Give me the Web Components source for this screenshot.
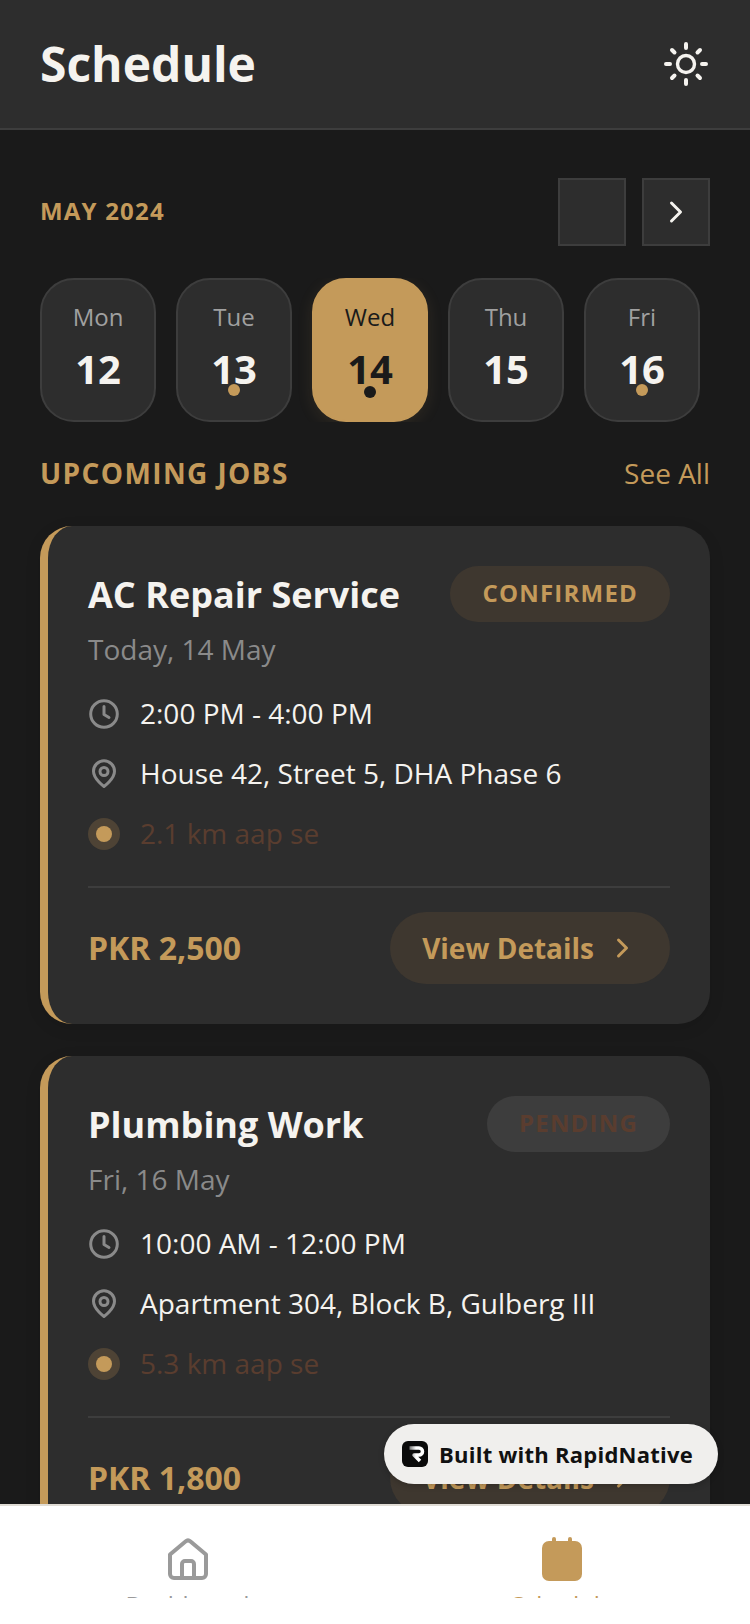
<!DOCTYPE html>
<html lang="en"><head><meta charset="utf-8"><title>Schedule</title>
<style>
html,body{margin:0;padding:0;background:#1a1a1a;}
body{width:750px;height:1624px;overflow:hidden;font-family:"Open Sans","Noto Sans",sans-serif;}
</style></head>
<body>
<app-shell>
  <app-header slot="header" title="Schedule"></app-header>
  <month-nav label="MAY 2024"></month-nav>
  <day-strip>
    <day-cell day="Mon" num="12"></day-cell>
    <day-cell day="Tue" num="13" dot></day-cell>
    <day-cell day="Wed" num="14" dot selected></day-cell>
    <day-cell day="Thu" num="15"></day-cell>
    <day-cell day="Fri" num="16" dot></day-cell>
  </day-strip>
  <section-head title="UPCOMING JOBS" action="See All"></section-head>
  <job-card title="AC Repair Service" status="CONFIRMED" date="Today, 14 May" time="2:00 PM - 4:00 PM" place="House 42, Street 5, DHA Phase 6" dist="2.1 km aap se" price="PKR 2,500"></job-card>
  <job-card pending title="Plumbing Work" status="PENDING" date="Fri, 16 May" time="10:00 AM - 12:00 PM" place="Apartment 304, Block B, Gulberg III" dist="5.3 km aap se" price="PKR 1,800"></job-card>
  <bottom-nav slot="nav"></bottom-nav>
  <built-badge slot="overlay"></built-badge>
</app-shell>
<script>
const GOLD='#c49a5a';
function def(name,html,init){
  customElements.define(name,class extends HTMLElement{
    connectedCallback(){
      if(this.shadowRoot)return;
      const a=n=>{const v=this.getAttribute(n);return v==null?'':v;};
      this.attachShadow({mode:'open'}).innerHTML=html(a,this);
      if(init)init(this);
    }
  });
}
def('app-shell',()=>`<style>
:host{display:flex;flex-direction:column;width:750px;height:1624px;position:relative;overflow:hidden;background:#1a1a1a;color:#f5f3ef;}
main{flex:1;min-height:0;overflow:hidden;padding:48px 40px 0;box-sizing:border-box;}
</style>
<slot name="header"></slot><main><slot></slot></main><slot name="nav"></slot><slot name="overlay"></slot>`);

def('app-header',a=>`<style>
:host{display:flex;flex:none;align-items:center;justify-content:space-between;height:130px;box-sizing:border-box;padding:0 40px;background:#2d2d2d;border-bottom:2px solid #3d3d3d;}
h1{margin:0;font:700 48px/64px "Open Sans",sans-serif;color:#f5f3ef;}
svg{display:block}
</style><h1>${a('title')}</h1>
<svg width="48" height="48" viewBox="0 0 48 48" fill="none" stroke="#f5f3ef" stroke-width="4" stroke-linecap="round"><circle cx="24" cy="24" r="8.500" stroke-width="3.400"/><path d="M24 4v4M24 40v4M4 24h4M40 24h4M10 10l2.500 2.500M35.500 35.500l2.500 2.500M10 38l2.500-2.500M35.500 12.500l2.500-2.500"/></svg>`);

def('month-nav',a=>`<style>
:host{display:flex;align-items:center;justify-content:space-between;height:68px;margin-bottom:32px;}
span{font:700 24px/32px "Open Sans",sans-serif;letter-spacing:1.2px;color:${GOLD};padding-bottom:2px;}
div{display:flex;gap:16px}
button{all:unset;display:flex;align-items:center;justify-content:center;box-sizing:border-box;width:68px;height:68px;background:#2d2d2d;border:2px solid #3d3d3d;}
</style><span>${a('label')}</span><div><button aria-label="Previous"></button><button aria-label="Next"><svg width="24" height="24" viewBox="0 0 24 24" fill="none" stroke="#f5f3ef" stroke-width="3" stroke-linecap="round" stroke-linejoin="round"><path d="M7.500 3l9 9-9 9"/></svg></button></div>`);

def('day-strip',()=>`<style>:host{display:flex;gap:20px;height:144px;overflow:hidden;}</style><slot></slot>`);

def('day-cell',(a,el)=>{const s=el.hasAttribute('selected'),d=el.hasAttribute('dot');return `<style>
:host{display:flex;flex:none;flex-direction:column;align-items:center;position:relative;box-sizing:border-box;width:116px;height:144px;padding-top:20px;border-radius:34px;
background:${s?GOLD:'#2d2d2d'};border:2px solid ${s?GOLD:'#3d3d3d'};${s?`box-shadow:0 4px 16px rgba(196,154,90,.12);`:''}}
.d{font:400 24px/34px "Open Sans",sans-serif;color:${s?'#1a1a1a':'#a0a0a0'};}
.n{font:700 40px/54px "Open Sans",sans-serif;color:${s?'#1a1a1a':'#f5f3ef'};margin-top:8px;}
i{position:absolute;left:50%;top:${s?'106px':'104px'};width:12px;height:12px;margin-left:-6px;border-radius:50%;background:${s?'#1a1a1a':GOLD};}
</style><span class="d">${a('day')}</span><span class="n">${a('num')}</span>${d?'<i></i>':''}`;});

def('section-head',a=>`<style>
:host{display:flex;align-items:center;justify-content:space-between;height:40px;margin:32px 0;}
b{font:700 28px/38px "Open Sans",sans-serif;letter-spacing:1.4px;color:${GOLD};padding-bottom:2px;}
span{font:400 28px/38px "Open Sans",sans-serif;color:${GOLD};padding-bottom:2px;}
</style><b>${a('title')}</b><span>${a('action')}</span>`);

def('job-card',(a,el)=>{const p=el.hasAttribute('pending');return `<style>
:host{display:block;box-sizing:border-box;height:498px;margin-bottom:32px;padding:40px 40px 40px 40px;background:#2d2d2d;border-left:8px solid ${GOLD};border-radius:32px;box-shadow:0 4px 16px rgba(0,0,0,.1);}
.top{display:flex;justify-content:space-between;align-items:flex-start;margin-bottom:25px;}
h2{margin:0;font:700 36px/58px "Open Sans",sans-serif;color:#f5f3ef;}
.date{font:400 28px/40px "Open Sans",sans-serif;color:#8a8a8a;margin-top:5px;}
.status{box-sizing:border-box;height:56px;padding:0 32px 2px;border-radius:28px;display:flex;align-items:center;font:700 24px/32px "Open Sans",sans-serif;letter-spacing:1.2px;
color:${p?'#5a3d2f':GOLD};background:${p?'#3d3d3d':'#3e372f'};}
.rows{display:flex;flex-direction:column;gap:20px;}
.row{display:flex;align-items:center;gap:20px;height:40px;font:400 28px/38px "Open Sans",sans-serif;color:#f5f3ef;}
.row span.t{padding-bottom:2px}
.row svg{display:block;flex:none}
.far{color:#5a3d2f;}
.ring{flex:none;box-sizing:border-box;width:32px;height:32px;border-radius:50%;background:#4e4335;display:flex;align-items:center;justify-content:center;}
.ring i{display:block;width:16px;height:16px;border-radius:50%;background:${GOLD};}
hr{border:0;height:2px;background:#3d3d3d;margin:32px 0 24px;}
.foot{display:flex;align-items:center;justify-content:space-between;}
.price{font:700 32px/44px "Open Sans",sans-serif;color:${GOLD};}
.btn{box-sizing:border-box;height:72px;padding:0 32px;border-radius:36px;background:#3e372f;display:flex;align-items:center;gap:16px;font:700 28px/40px "Open Sans",sans-serif;color:${GOLD};}
.btn svg{display:block}
</style>
<div class="top"><div><h2>${a('title')}</h2><div class="date">${a('date')}</div></div><div class="status">${a('status')}</div></div>
<div class="rows">
<div class="row"><svg width="32" height="32" viewBox="0 0 32 32" fill="none" stroke="#8a8a8a" stroke-width="3" stroke-linecap="round" stroke-linejoin="round"><circle cx="16" cy="16" r="13.300"/><path d="M16 8.500v8l5 3"/></svg><span class="t">${a('time')}</span></div>
<div class="row"><svg width="32" height="32" viewBox="0 0 32 32" fill="none" stroke="#8a8a8a" stroke-width="3" stroke-linecap="round" stroke-linejoin="round"><path d="M16 28.500C16 28.500 5.500 21 5.500 13.300a10.500 10.500 0 0 1 21 0C26.500 21 16 28.500 16 28.500Z"/><circle cx="16" cy="13.500" r="4"/></svg><span class="t">${a('place')}</span></div>
<div class="row far"><span class="ring"><i></i></span><span class="t">${a('dist')}</span></div>
</div>
<hr>
<div class="foot"><span class="price">${a('price')}</span><div class="btn"><span>View Details</span><svg width="28" height="24" viewBox="0 0 28 24" fill="none" stroke="${GOLD}" stroke-width="3" stroke-linecap="round" stroke-linejoin="round"><path d="M8.500 4l8 8-8 8"/></svg></div></div>`;});

def('bottom-nav',()=>`<style>
:host{display:flex;flex:none;height:120px;box-sizing:border-box;background:#fff;border-top:2px solid #e0dcd5;position:relative;z-index:1;}
</style>
<nav-tab label="Dashboard" color="#9a9a9a"><svg style="margin-left:1px" width="44" height="44" viewBox="0 0 44 44" fill="none" stroke="#9a9a9a" stroke-width="4" stroke-linejoin="round"><path d="M4 17.500 19.500 4.500a3.800 3.800 0 0 1 5 0L40 17.500V37a4 4 0 0 1-4 4H8a4 4 0 0 1-4-4Z"/><path d="M16 41V27a3 3 0 0 1 3-3h6a3 3 0 0 1 3 3v14"/></svg></nav-tab>
<nav-tab label="Schedule" color="${GOLD}"><svg style="margin-right:1px" width="44" height="44" viewBox="0 0 44 44" fill="${GOLD}"><rect x="2" y="4" width="40" height="40" rx="7"/><rect x="12" y="0" width="4" height="8" rx="2"/><rect x="28" y="0" width="4" height="8" rx="2"/></svg></nav-tab>`);

def('nav-tab',a=>`<style>
:host{flex:1;display:flex;flex-direction:column;align-items:center;padding-top:31px;}
::slotted(svg){display:block}
.clip{height:8px;margin-top:9px;overflow:hidden;}
span{display:block;font:400 24px/32px "Open Sans",sans-serif;color:${a('color')};white-space:nowrap;margin-top:-1px;}
</style><slot></slot><div class="clip"><span>${a('label')}</span></div>`);

def('built-badge',()=>`<style>
:host{position:absolute;left:384px;top:1424px;width:334px;height:60px;box-sizing:border-box;display:flex;align-items:center;gap:11px;padding-left:18px;border-radius:30px;background:#f0efed;box-shadow:0 2px 6px rgba(0,0,0,.2);z-index:2;font:700 22px/32px "Open Sans",sans-serif;letter-spacing:.25px;color:#111;white-space:nowrap;}
svg{display:block;flex:none}
</style><svg width="26" height="26" viewBox="0 0 26 26"><defs><linearGradient id="rg" gradientUnits="userSpaceOnUse" x1="6" y1="0" x2="14" y2="0"><stop offset="0" stop-color="#555"/><stop offset="1" stop-color="#fff"/></linearGradient></defs><rect width="26" height="26" rx="6" fill="#0a0a0a"/><path d="M7.500 7h9.500a3.500 3.500 0 0 1 0 7h-5l6 6" fill="none" stroke="url(#rg)" stroke-width="3.500" stroke-linejoin="round"/></svg><span>Built with RapidNative</span>`);
</script>
</body></html>
